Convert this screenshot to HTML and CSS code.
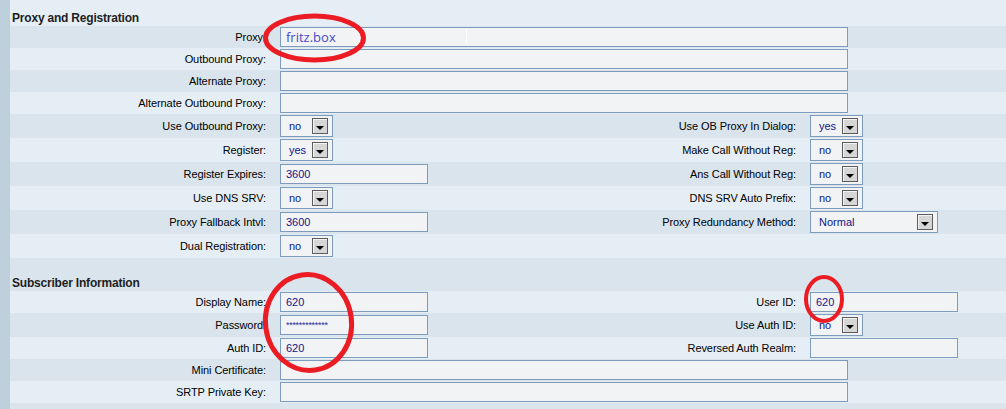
FILE: index.html
```html
<!DOCTYPE html>
<html>
<head>
    <link rel="stylesheet" href="styles.css">
</head>
<body>
    <div class="page">
        <div class="section-title">Proxy and Registration</div>

        <div class="row">
            <div class="label">Proxy:</div>
            <div class="field span-3">
                <div class="proxy-wrap">
                    <input class="text long host" type="text" value="fritz.box">
                    <span class="caret"></span>
                </div>
            </div>
        </div>
        <div class="row">
            <div class="label">Outbound Proxy:</div>
            <div class="field span-3"><input class="text long" type="text"></div>
        </div>
        <div class="row">
            <div class="label">Alternate Proxy:</div>
            <div class="field span-3"><input class="text long" type="text"></div>
        </div>
        <div class="row">
            <div class="label">Alternate Outbound Proxy:</div>
            <div class="field span-3"><input class="text long" type="text"></div>
        </div>

        <div class="row">
            <div class="label">Use Outbound Proxy:</div>
            <div class="field"><div class="select"><span>no</span><span class="drop"></span></div></div>
            <div class="label">Use OB Proxy In Dialog:</div>
            <div class="field"><div class="select"><span>yes</span><span class="drop"></span></div></div>
        </div>
        <div class="row">
            <div class="label">Register:</div>
            <div class="field"><div class="select"><span>yes</span><span class="drop"></span></div></div>
            <div class="label">Make Call Without Reg:</div>
            <div class="field"><div class="select"><span>no</span><span class="drop"></span></div></div>
        </div>
        <div class="row">
            <div class="label">Register Expires:</div>
            <div class="field"><input class="text" type="text" value="3600"></div>
            <div class="label">Ans Call Without Reg:</div>
            <div class="field"><div class="select"><span>no</span><span class="drop"></span></div></div>
        </div>
        <div class="row">
            <div class="label">Use DNS SRV:</div>
            <div class="field"><div class="select"><span>no</span><span class="drop"></span></div></div>
            <div class="label">DNS SRV Auto Prefix:</div>
            <div class="field"><div class="select"><span>no</span><span class="drop"></span></div></div>
        </div>
        <div class="row">
            <div class="label">Proxy Fallback Intvl:</div>
            <div class="field"><input class="text" type="text" value="3600"></div>
            <div class="label">Proxy Redundancy Method:</div>
            <div class="field"><div class="select wide"><span>Normal</span><span class="drop"></span></div></div>
        </div>
        <div class="row">
            <div class="label">Dual Registration:</div>
            <div class="field"><div class="select"><span>no</span><span class="drop"></span></div></div>
        </div>

        <div class="section-title spaced">Subscriber Information</div>

        <div class="row">
            <div class="label">Display Name:</div>
            <div class="field"><input class="text" type="text" value="620"></div>
            <div class="label">User ID:</div>
            <div class="field"><input class="text" type="text" value="620"></div>
        </div>
        <div class="row">
            <div class="label">Password:</div>
            <div class="field"><input class="text secret" type="text" value="*************"></div>
            <div class="label">Use Auth ID:</div>
            <div class="field"><div class="select"><span>no</span><span class="drop"></span></div></div>
        </div>
        <div class="row">
            <div class="label">Auth ID:</div>
            <div class="field"><input class="text" type="text" value="620"></div>
            <div class="label">Reversed Auth Realm:</div>
            <div class="field"><input class="text" type="text"></div>
        </div>
        <div class="row">
            <div class="label">Mini Certificate:</div>
            <div class="field span-3"><input class="text long" type="text"></div>
        </div>
        <div class="row">
            <div class="label">SRTP Private Key:</div>
            <div class="field span-3"><input class="text long" type="text"></div>
        </div>
        <div class="row"></div>
    </div>

    <!-- red marker circles drawn over the screenshot -->
    <svg class="marks" width="1006" height="409" viewBox="0 0 1006 409">
        <ellipse cx="314.5" cy="38" rx="49" ry="22" />
        <ellipse cx="308.5" cy="322.5" rx="43" ry="48" transform="rotate(-8 308.5 322.5)" />
        <ellipse cx="824" cy="299" rx="18" ry="22" class="thin" />
    </svg>
</body>
</html>
```

FILE: styles.css
```css
body {
    margin: 0;
    padding: 0;
    background-color: #e6eef5;
    font-family: "Liberation Sans", Arial, sans-serif;
    font-size: 11px;
    color: #000000;
    overflow: hidden;
}

.page {
    border-left: 10px solid #bdd0dc;
    min-height: 409px;
    box-sizing: border-box;
}

.page > :nth-child(odd) {
    background-color: #e6eef5;
}

.page > :nth-child(even) {
    background-color: #d9e4ed;
}

.section-title {
    height: 26px;
    box-sizing: border-box;
    padding: 11px 0 0 2px;
    line-height: 14px;
    font-size: 12px;
    font-weight: bold;
    letter-spacing: -0.2px;
    color: #1e1e1e;
}

.section-title.spaced {
    height: 33px;
    padding-top: 18px;
}

.row {
    display: grid;
    grid-template-columns: 266px 264px 266px 1fr;
    align-items: center;
    padding: 1px 0;
    min-height: 20px;
}

.label {
    text-align: right;
    padding-right: 10px;
    white-space: nowrap;
    letter-spacing: -0.08px;
}

.field {
    padding-left: 4px;
    display: flex;
}

.span-3 {
    grid-column: 2 / span 3;
}

.text {
    box-sizing: border-box;
    width: 148px;
    height: 20px;
    margin: 0;
    padding: 0 5px;
    border: 1px solid #7d9bbd;
    background-color: #f1f3f5;
    font-family: "Liberation Sans", Arial, sans-serif;
    font-size: 11px;
    color: #14148c;
    outline: none;
}

.text.long {
    width: 568px;
}

.text.host {
    font-family: "Open Sans", "Noto Sans", sans-serif;
    font-size: 13px;
    color: #4a4acc;
}

.text.secret {
    font-size: 9px;
    letter-spacing: -0.3px;
    color: #2a2aa0;
}

.proxy-wrap {
    position: relative;
    display: flex;
}

.caret {
    position: absolute;
    left: 186px;
    top: 2px;
    width: 1px;
    height: 14px;
    background-color: #ffffff;
}

.select {
    box-sizing: border-box;
    width: 53px;
    height: 22px;
    display: flex;
    align-items: center;
    justify-content: space-between;
    padding: 0 4px 0 8px;
    border: 1px solid #7d9bbd;
    background-color: #f1f3f5;
    color: #14148c;
}

.select.wide {
    width: 128px;
}

.drop {
    box-sizing: border-box;
    width: 16px;
    height: 16px;
    border: 1px solid #5c5c5c;
    background-color: #d6d6d6;
    box-shadow: inset 1px 1px 0 #f4f4f4;
    display: flex;
    justify-content: center;
    align-items: center;
}

.drop::after {
    content: "";
    margin-top: 3px;
    border-left: 4px solid transparent;
    border-right: 4px solid transparent;
    border-top: 4px solid #000000;
}

.marks {
    position: absolute;
    top: 0;
    left: 0;
    pointer-events: none;
}

.marks ellipse {
    fill: none;
    stroke: #ec1c24;
    stroke-width: 5;
}

.marks ellipse.thin {
    stroke-width: 4;
}
```
